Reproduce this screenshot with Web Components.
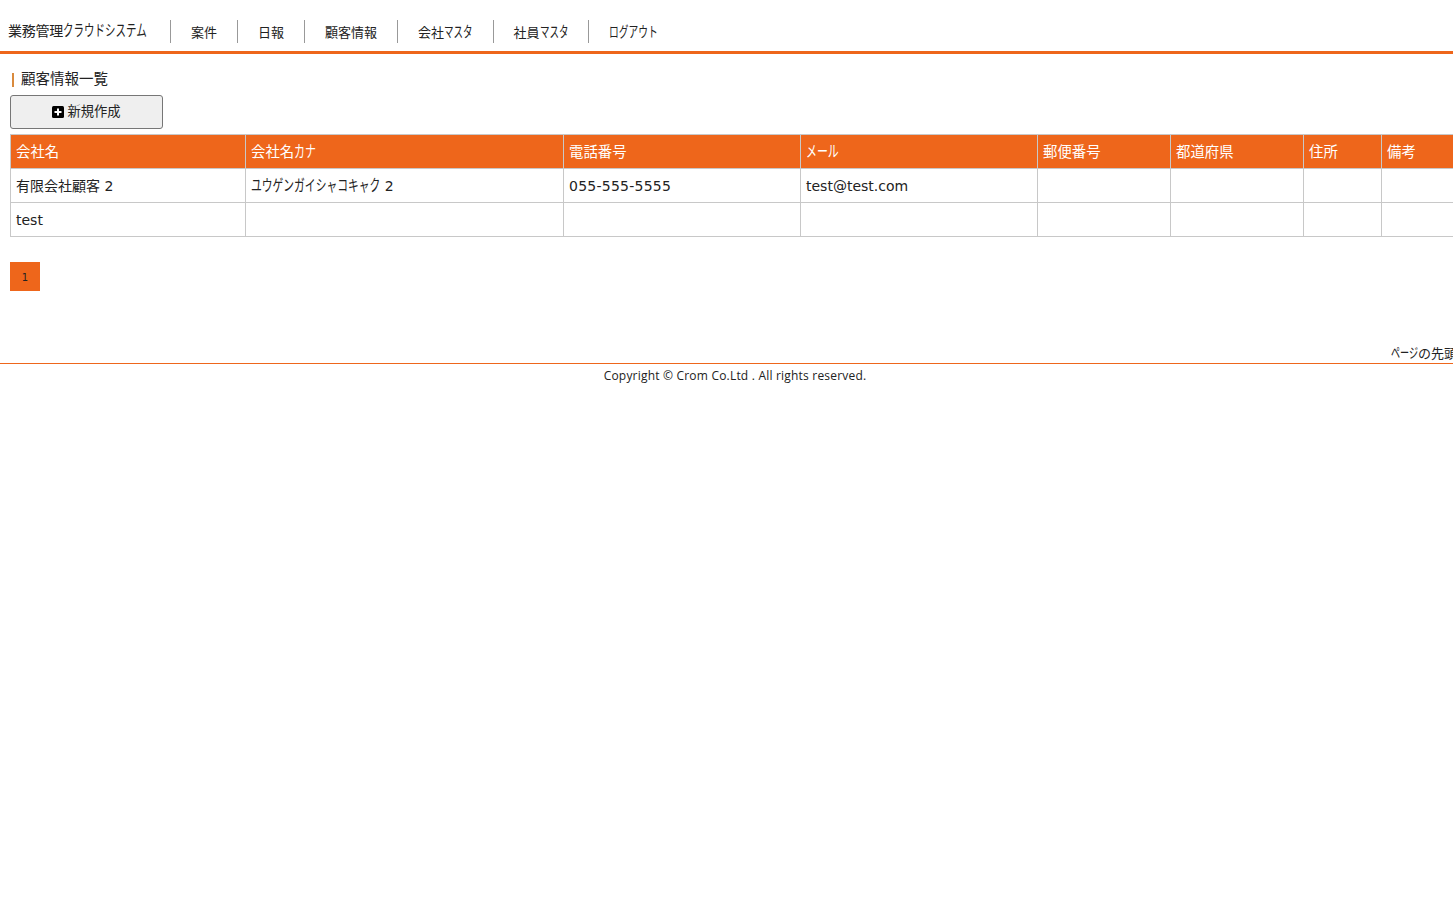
<!DOCTYPE html>
<html lang="ja">
<head>
<meta charset="utf-8">
<title>顧客情報一覧</title>
<style>
  html { overflow: hidden; }
  body {
    margin: 0;
    width: 1470px;
    color: #222;
    background: #fff;
    font-family: "Noto Sans CJK JP", "Open Sans", sans-serif;
  }
</style>
</head>
<body>
<app-header>
  <nav-link>案件</nav-link>
  <nav-link>日報</nav-link>
  <nav-link>顧客情報</nav-link>
  <nav-link>会社<kana-run squeeze="0.73">マスタ</kana-run></nav-link>
  <nav-link>社員<kana-run squeeze="0.73">マスタ</kana-run></nav-link>
  <nav-link><kana-run squeeze="0.75">ログアウト</kana-run></nav-link>
</app-header>
<page-title>顧客情報一覧</page-title>
<new-button>新規作成</new-button>
<customer-table></customer-table>
<page-number>1</page-number>
<app-footer></app-footer>

<script>
const ORANGE = '#ee661b';
const KANA_SIZE = 1.1;

// The reference font has tall, narrow kana. Enlarge the glyphs, squeeze them
// and pull the following text back by the width that the squeeze saved.
class KanaRun extends HTMLElement {
  constructor() {
    super();
    this.attachShadow({ mode: 'open' }).innerHTML = `
      <style>
        :host {
          display: inline-block;
          font-size: ${KANA_SIZE}em;
          line-height: 1;
          letter-spacing: 0;
          white-space: nowrap;
          transform-origin: left center;
          transform: scaleX(var(--squeeze));
          margin-right: calc((var(--squeeze) - 1) * var(--count) * 1em);
        }
      </style>
      <slot></slot>`;
  }

  connectedCallback() {
    const squeeze = Number(this.getAttribute('squeeze') || 0.75) / KANA_SIZE;
    this.style.setProperty('--squeeze', String(squeeze));
    this.style.setProperty('--count', String(this.textContent.length));
  }
}

class AppHeader extends HTMLElement {
  constructor() {
    super();
    this.attachShadow({ mode: 'open' }).innerHTML = `
      <style>
        :host {
          display: flex;
          align-items: flex-start;
          padding: 20px 0 0 8px;
          box-sizing: border-box;
          border-bottom: 3px solid ${ORANGE};
          height: 54px;
          font-size: 13px;
        }
        .brand {
          width: 162px;
          height: 23px;
          line-height: 21px;
          font-size: 14px;
          letter-spacing: -0.25px;
          white-space: nowrap;
          flex: none;
        }
      </style>
      <div class="brand">業務管理<kana-run squeeze="0.75">クラウドシステム</kana-run></div>
      <slot></slot>`;
  }
}

class NavLink extends HTMLElement {
  constructor() {
    super();
    this.attachShadow({ mode: 'open' }).innerHTML = `
      <style>
        :host {
          display: block;
          height: 23px;
          line-height: 24px;
          padding: 0 20px;
          border-left: 1px solid #999;
          white-space: nowrap;
        }
      </style>
      <slot></slot>`;
  }
}

class PageTitle extends HTMLElement {
  constructor() {
    super();
    this.attachShadow({ mode: 'open' }).innerHTML = `
      <style>
        :host {
          display: block;
          position: relative;
          margin: 16px 0 0 12px;
          height: 16px;
          line-height: 16px;
          padding-left: 9px;
          font-size: 14.5px;
        }
        :host::before {
          content: "";
          position: absolute;
          left: 0;
          top: 3px;
          width: 2px;
          height: 14px;
          background: #d98a3d;
        }
      </style>
      <slot></slot>`;
  }
}

class NewButton extends HTMLElement {
  constructor() {
    super();
    this.attachShadow({ mode: 'open' }).innerHTML = `
      <style>
        :host {
          display: flex;
          align-items: center;
          justify-content: center;
          gap: 3px;
          box-sizing: border-box;
          width: 153px;
          height: 34px;
          margin: 9px 0 5px 10px;
          background: #efefef;
          border: 1px solid #767676;
          border-radius: 3px;
          font-size: 13.3px;
          padding-bottom: 3px;
        }
        svg { display: block; flex: none; margin-top: 2px; }
      </style>
      <svg width="12" height="12" viewBox="0 0 12 12" aria-hidden="true">
        <rect width="12" height="12" rx="1.5" fill="#000"/>
        <path d="M5 2.5h2V5h2.5v2H7v2.5H5V7H2.5V5H5z" fill="#fff"/>
      </svg>
      <slot></slot>`;
  }
}

class CustomerTable extends HTMLElement {
  constructor() {
    super();
    const columns = [
      ['会社名', 235], ['会社名<kana-run squeeze="0.76">カナ</kana-run>', 318], ['電話番号', 237],
      ['<kana-run squeeze="0.76">メール</kana-run>', 237],
      ['郵便番号', 133], ['都道府県', 133], ['住所', 78], ['備考', 120],
    ];
    const rows = [
      [
        '<span class="cjk">有限会社顧客 2</span>',
        '<span class="kana"><kana-run squeeze="0.77">ユウゲンガイシャコキャク</kana-run> 2</span>',
        '<b>055-555-5555</b>',
        'test@test.com', '', '', '', '',
      ],
      ['test', '', '', '', '', '', '', ''],
    ];
    const cols = columns.map(([, w]) => `<col style="width:${w}px">`).join('');
    const head = columns.map(([label]) => `<th>${label}</th>`).join('');
    const body = rows
      .map((row) => `<tr>${row.map((cell) => `<td>${cell}</td>`).join('')}</tr>`)
      .join('');
    this.attachShadow({ mode: 'open' }).innerHTML = `
      <style>
        :host { display: block; margin-left: 10px; width: 1492px; }
        table {
          table-layout: fixed;
          border-collapse: collapse;
          width: 1491px;
          font-size: 14.4px;
        }
        th, td {
          height: 34px;
          padding: 0 5px;
          box-sizing: border-box;
          border: 1px solid #c8c8c8;
          text-align: left;
          font-weight: normal;
          white-space: nowrap;
        }
        th { background: ${ORANGE}; color: #fff; padding-bottom: 3px; }
        td { font-family: "DejaVu Sans", "Noto Sans CJK JP", sans-serif; font-size: 14px; }
        .cjk { position: relative; top: -1px; }
        .kana { position: relative; top: 1px; }
        b { font-weight: normal; letter-spacing: 0.25px; }
      </style>
      <table>
        <colgroup>${cols}</colgroup>
        <thead><tr>${head}</tr></thead>
        <tbody>${body}</tbody>
      </table>`;
  }
}

class PageNumber extends HTMLElement {
  constructor() {
    super();
    this.attachShadow({ mode: 'open' }).innerHTML = `
      <style>
        :host {
          display: flex;
          align-items: center;
          justify-content: center;
          box-sizing: border-box;
          width: 30px;
          height: 29px;
          margin: 25px 0 0 10px;
          padding-top: 1px;
          background: ${ORANGE};
          font-size: 10px;
          font-family: "DejaVu Sans", sans-serif;
        }
      </style>
      <slot></slot>`;
  }
}

class AppFooter extends HTMLElement {
  constructor() {
    super();
    this.attachShadow({ mode: 'open' }).innerHTML = `
      <style>
        :host { display: block; margin-top: 54px; font-size: 12px; }
        .top { text-align: right; height: 18px; line-height: 12px; white-space: nowrap; font-size: 13px; }
        .copy {
          border-top: 1px solid ${ORANGE};
          text-align: center;
          line-height: 23px;
          font-family: "Open Sans", sans-serif;
          letter-spacing: 0.2px;
        }
      </style>
      <div class="top"><kana-run squeeze="0.7">ページ</kana-run>の先頭へ</div>
      <div class="copy">Copyright © Crom Co.Ltd . All rights reserved.</div>`;
  }
}

customElements.define('kana-run', KanaRun);
customElements.define('app-header', AppHeader);
customElements.define('nav-link', NavLink);
customElements.define('page-title', PageTitle);
customElements.define('new-button', NewButton);
customElements.define('customer-table', CustomerTable);
customElements.define('page-number', PageNumber);
customElements.define('app-footer', AppFooter);
</script>
</body>
</html>
